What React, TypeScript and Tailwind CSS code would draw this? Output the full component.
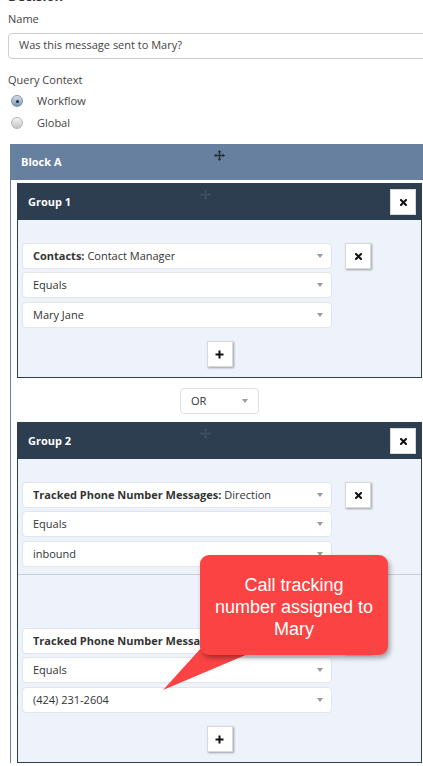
import React from 'react';

const Caret = () => (
  <span className="h-0 w-0 border-x-[3.5px] border-t-[4px] border-x-transparent border-t-[#9a9a9a]" />
);

function Select({ children, className = '' }: { children: React.ReactNode; className?: string }) {
  return (
    <div
      className={`flex h-[26px] items-center justify-between rounded-[4px] border border-[#e2e5ea] bg-white pl-[10px] pr-[8px] ${className}`}
    >
      <span className="truncate whitespace-nowrap">{children}</span>
      <Caret />
    </div>
  );
}

const XIcon = () => (
  <svg width="7" height="7" viewBox="0 0 7 7">
    <path d="M1 1 L6 6 M6 1 L1 6" stroke="#111" strokeWidth="2" strokeLinecap="square" />
  </svg>
);

const PlusIcon = () => (
  <svg width="9" height="9" viewBox="0 0 9 9">
    <path d="M4.5 0.5 V8.5 M0.5 4.5 H8.5" stroke="#111" strokeWidth="2" />
  </svg>
);

function SquareBtn({ children, className = '' }: { children: React.ReactNode; className?: string }) {
  return (
    <div
      className={`flex h-[26px] w-[26px] shrink-0 items-center justify-center border border-[#d9d9d9] bg-white shadow-[1px_1px_2px_rgba(0,0,0,0.35)] ${className}`}
    >
      {children}
    </div>
  );
}

const MoveIcon = ({ color }: { color: string }) => (
  <svg width="11" height="11" viewBox="0 0 11 11" fill={color}>
    <rect x="4.8" y="1.5" width="1.4" height="8" />
    <rect x="1.5" y="4.8" width="8" height="1.4" />
    <path d="M5.5 0 L7.5 2.3 H3.5 Z" />
    <path d="M5.5 11 L7.5 8.7 H3.5 Z" />
    <path d="M0 5.5 L2.3 3.5 V7.5 Z" />
    <path d="M11 5.5 L8.7 3.5 V7.5 Z" />
  </svg>
);

function Radio({ checked, label }: { checked?: boolean; label: string }) {
  return (
    <div className="flex h-[22px] items-center">
      <span
        className={`ml-[3px] flex h-[12px] w-[12px] items-center justify-center rounded-full border ${
          checked
            ? 'border-[#7f96ad] bg-[linear-gradient(#d4dfeb,#7c97b3)]'
            : 'border-[#b5b5b5] bg-[linear-gradient(#f4f4f4,#c4c4c4)]'
        }`}
      >
        {checked && <span className="h-[3px] w-[3px] rounded-full bg-[#1d2b3a]" />}
      </span>
      <span className="ml-[14px] text-[11px] text-[#444]">{label}</span>
    </div>
  );
}

function Condition({ field, value, x = true }: { field: [string, string]; value: string; x?: boolean }) {
  return (
    <div className="flex items-start">
      <div className="flex w-[310px] flex-col">
        <Select>
          <span className="font-bold">{field[0]}</span> {field[1]}
        </Select>
        <Select className="mt-[3px]">Equals</Select>
        <Select className="mt-[4px]">{value}</Select>
      </div>
      {x && (
        <SquareBtn className="ml-[13px]">
          <XIcon />
        </SquareBtn>
      )}
    </div>
  );
}

function GroupHeader({ title }: { title: string }) {
  return (
    <div className="relative flex h-[36px] items-center justify-between bg-[#2c3e50] pl-[10px] pr-[5px]">
      <span className="text-[11px] font-bold text-white">{title}</span>
      <span className="absolute left-[182px] top-[5px]">
        <MoveIcon color="#3e5064" />
      </span>
      <SquareBtn className="border-[#2c3e50] shadow-none">
        <XIcon />
      </SquareBtn>
    </div>
  );
}

export default function App() {
  return (
    <div className="relative h-[766px] w-[423px] overflow-hidden bg-white font-['Open_Sans',sans-serif] text-[11px] text-[#333]">
      <div className="pl-[8px]">
        <div className="-mt-[11px] h-[14px] text-[13px] font-bold leading-[14px] text-[#333]">Decision</div>
        <div className="mt-[8px] text-[11px] text-[#444]">Name</div>
        <div className="mt-[5px] flex h-[26px] w-[440px] items-center rounded-[4px] border border-[#cfcfcf] pl-[10px] text-[11px] text-[#444]">
          Was this message sent to Mary?
        </div>
        <div className="mt-[13px] text-[11px] text-[#444]">Query Context</div>
        <div className="mt-[2px]">
          <Radio checked label="Workflow" />
          <Radio label="Global" />
        </div>
      </div>

      <div className="ml-[10px] mt-[10px] w-[440px]">
        <div className="relative flex h-[36px] items-center bg-[#68809f] pl-[11px]">
          <span className="text-[11px] font-bold text-white">Block A</span>
          <span className="absolute left-[204px] top-[6px]">
            <MoveIcon color="#2a2f36" />
          </span>
        </div>

        <div className="border-l border-[#68809f] pl-[6px] pt-[3px]">
          <div className="w-[405px] border border-[#2c3e50] bg-[#eef2fa]">
            <GroupHeader title="Group 1" />
            <div className="px-[4px] pb-[10px] pt-[23px]">
              <Condition field={['Contacts:', 'Contact Manager']} value="Mary Jane" />
              <div className="mt-[13px] flex justify-center">
                <SquareBtn>
                  <PlusIcon />
                </SquareBtn>
              </div>
            </div>
          </div>

          <div className="flex w-[405px] justify-center pb-[8px] pt-[10px]">
            <div className="flex h-[26px] w-[79px] items-center justify-between rounded-[4px] border border-[#e0e0e0] bg-white pl-[10px] pr-[10px] text-[11px]">
              OR
              <Caret />
            </div>
          </div>

          <div className="w-[405px] border border-[#2c3e50] bg-[#eef2fa]">
            <GroupHeader title="Group 2" />
            <div className="px-[4px] pb-[7px] pt-[23px]">
              <Condition field={['Tracked Phone Number Messages:', 'Direction']} value="inbound" />
            </div>
            <div className="border-t border-[#c9ccd1] px-[4px] pb-[10px] pt-[53px]">
              <Condition field={['Tracked Phone Number Messages:', 'Phone Number']} value="(424) 231-2604" />
              <div className="mt-[13px] flex justify-center">
                <SquareBtn>
                  <PlusIcon />
                </SquareBtn>
              </div>
            </div>
          </div>
        </div>
      </div>

      {/* callout */}
      <svg className="absolute left-[160px] top-[640px]" width="90" height="55" viewBox="0 0 90 55">
        <path d="M43 6 L88 14 L3 50 Z" fill="#fb4343" />
      </svg>
      <div className="absolute left-[200px] top-[555px] flex h-[100px] w-[188px] items-center justify-center rounded-[9px] bg-[#fb4343] pt-[3px] text-center font-['Liberation_Sans',Arial,sans-serif] text-[18px] leading-[22px] text-white shadow-[2px_3px_5px_rgba(0,0,0,0.35)]">
        Call tracking
        <br />
        number assigned to
        <br />
        Mary
      </div>
    </div>
  );
}
